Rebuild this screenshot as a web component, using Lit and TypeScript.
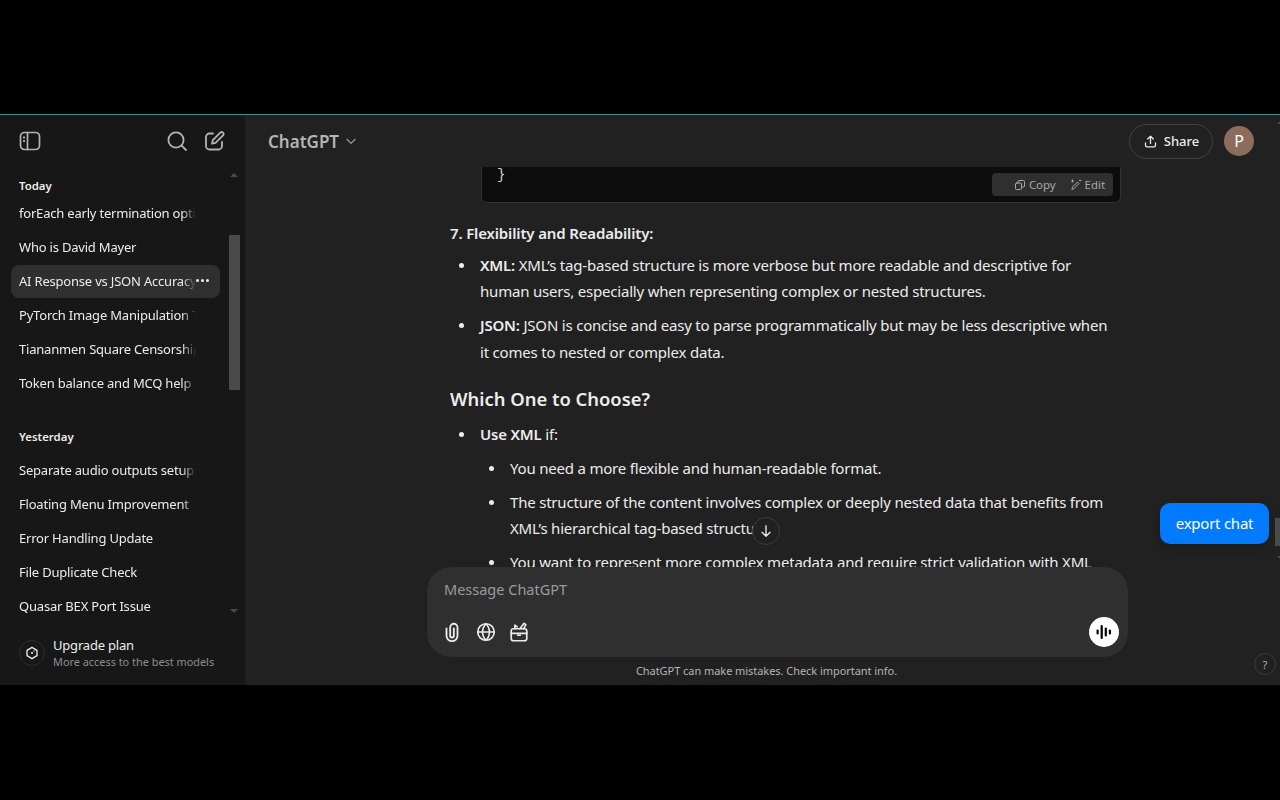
import { LitElement, html, css, svg } from 'lit';
import { customElement } from 'lit/decorators.js';

const today = [
  'forEach early termination options',
  'Who is David Mayer',
  'AI Response vs JSON Accuracy',
  'PyTorch Image Manipulation Tips',
  'Tiananmen Square Censorship',
  'Token balance and MCQ help',
];
const yesterday = [
  'Separate audio outputs setup',
  'Floating Menu Improvement',
  'Error Handling Update',
  'File Duplicate Check',
  'Quasar BEX Port Issue',
];

const icon = (size: number, body: unknown) => html`<svg
  width=${size}
  height=${size}
  viewBox="0 0 24 24"
  fill="none"
  stroke="currentColor"
  stroke-width="2"
  stroke-linecap="round"
  stroke-linejoin="round"
>${body}</svg>`;

@customElement('app-root')
export class AppRoot extends LitElement {
  static styles = css`
    :host {
      display: block;
      height: 800px;
      background: #000;
      font-family: 'Noto Sans', 'Open Sans', sans-serif;
      overflow: hidden;
      padding-top: 114px;
      box-sizing: border-box;
    }
    .frame {
      display: flex;
      height: 571px;
      border-top: 1px solid #3f8f8c;
      box-sizing: border-box;
      position: relative;
      background: #212121;
      color: #ececec;
    }
    .sidebar {
      width: 245px;
      flex: none;
      background: #171717;
      display: flex;
      flex-direction: column;
    }
    .side-top {
      height: 52px;
      flex: none;
      display: flex;
      align-items: center;
      padding: 0 19px 0 18px;
      color: #b4b4b4;
      gap: 13px;
    }
    .side-top .spacer {
      flex: 1;
    }
    .side-body {
      height: 456px;
      flex: none;
      display: flex;
      overflow: hidden;
    }
    .list {
      width: 220px;
      flex: none;
      padding: 10px 0 0 11px;
      box-sizing: border-box;
    }
    .label {
      height: 20px;
      line-height: 18px;
      padding-left: 8px;
      font-size: 11.4px;
      font-weight: 600;
      color: #ececec;
    }
    .item {
      height: 33px;
      margin-bottom: 1px;
      width: 209px;
      box-sizing: border-box;
      border-radius: 8px;
      display: flex;
      align-items: center;
      padding: 0 0 2px 8px;
      font-size: 13px;
      letter-spacing: -0.2px;
      color: #ececec;
      position: relative;
    }
    .item span {
      display: block;
      width: 177px;
      white-space: nowrap;
      overflow: hidden;
      -webkit-mask-image: linear-gradient(to right, #000 92%, transparent);
      mask-image: linear-gradient(to right, #000 92%, transparent);
    }
    .item.active {
      background: #2f2f2f;
    }
    .dots {
      position: absolute;
      left: 185px;
      top: 14px;
      display: flex;
      gap: 2px;
    }
    .dots i {
      width: 3px;
      height: 3px;
      border-radius: 50%;
      background: #ececec;
    }
    .group-gap {
      height: 27px;
    }
    .yesterday-gap {
      height: 6px;
    }
    .side-scroll {
      width: 11px;
      margin-left: 9px;
      position: relative;
      background: #171717;
    }
    .thumb {
      position: absolute;
      top: 68px;
      left: 0;
      width: 11px;
      height: 155px;
      background: #4a4a4a;
    }
    .arrow-up,
    .arrow-down {
      position: absolute;
      left: 1px;
      width: 0;
      height: 0;
      border-left: 4px solid transparent;
      border-right: 4px solid transparent;
    }
    .arrow-up {
      top: 6px;
      border-bottom: 4px solid #4a4a4a;
    }
    .arrow-down {
      top: 442px;
      border-top: 4px solid #4a4a4a;
    }
    .upgrade {
      flex: 1;
      display: flex;
      align-items: center;
      padding: 0 0 2px 19px;
      gap: 8px;
    }
    .up-icon {
      width: 26px;
      height: 26px;
      border-radius: 50%;
      border: 1px solid #2f2f2f;
      box-sizing: border-box;
      display: flex;
      align-items: center;
      justify-content: center;
      color: #ececec;
    }
    .up-title {
      font-size: 13px;
      letter-spacing: -0.2px;
      line-height: 17px;
      color: #ececec;
    }
    .up-sub {
      font-size: 10.9px;
      line-height: 16px;
      color: #8e8e8e;
    }
    .main {
      flex: 1;
      min-width: 0;
      display: flex;
      flex-direction: column;
    }
    .header {
      height: 52px;
      flex: none;
      display: flex;
      align-items: center;
      padding: 0 26px 0 23px;
    }
    .model {
      font-size: 17px;
      font-weight: 600;
      color: #b4b4b4;
    }
    .chev {
      margin-left: 5px;
      display: flex;
      color: #9b9b9b;
    }
    .header .spacer {
      flex: 1;
    }
    .share {
      width: 84px;
      height: 35px;
      border: 1px solid #424242;
      border-radius: 18px;
      box-sizing: border-box;
      display: flex;
      align-items: center;
      justify-content: center;
      gap: 6px;
      font-size: 13px;
      font-weight: 500;
      color: #ececec;
    }
    .avatar {
      width: 30px;
      height: 30px;
      margin-left: 11px;
      border-radius: 50%;
      background: #8c6d5d;
      display: flex;
      align-items: center;
      justify-content: center;
      font-size: 16px;
      color: #fff;
    }
    .thread {
      height: 400px;
      flex: none;
      overflow: hidden;
      position: relative;
    }
    .col {
      width: 672px;
      margin-left: 205px;
      font-size: 15px;
      letter-spacing: -0.2px;
      line-height: 26.4px;
      color: #ececec;
    }
    .code {
      margin: -11px 0 0 31px;
      width: 640px;
      height: 47px;
      box-sizing: border-box;
      background: #0d0d0d;
      border: 1px solid #333;
      border-radius: 6px;
      position: relative;
      font-family: 'Liberation Mono', monospace;
      font-size: 14px;
      line-height: 20px;
      padding: 8px 0 0 15px;
      color: #d4d4d4;
    }
    .toolbar {
      position: absolute;
      right: 7px;
      bottom: 6px;
      width: 121px;
      height: 23px;
      background: #2f2f2f;
      border-radius: 4px;
      display: flex;
      align-items: center;
      justify-content: flex-end;
      gap: 14px;
      padding-right: 8px;
      box-sizing: border-box;
      font-family: 'Noto Sans', sans-serif;
      font-size: 11.4px;
      letter-spacing: 0;
      color: #a8a8a8;
    }
    .toolbar div {
      display: flex;
      align-items: center;
      gap: 3px;
    }
    h4 {
      margin: 17px 0 6px;
      font-size: 15px;
      letter-spacing: -0.15px;
      line-height: 26px;
      font-weight: 600;
    }
    h3 {
      margin: 19px 0 7px;
      font-size: 18.4px;
      letter-spacing: 0;
      line-height: 30px;
      font-weight: 600;
    }
    ul {
      margin: 0;
      padding-left: 30px;
      list-style: none;
    }
    li {
      margin-bottom: 7.5px;
      white-space: nowrap;
      position: relative;
    }
    li::before {
      content: '';
      position: absolute;
      left: -21.5px;
      top: 11px;
      width: 5px;
      height: 5px;
      border-radius: 50%;
      background: #ececec;
    }
    li > ul {
      margin-top: 7.5px;
    }
    b {
      font-weight: 600;
    }
    .composer-wrap {
      flex: 1;
      position: relative;
    }
    .composer {
      margin-left: 182px;
      width: 701px;
      height: 90px;
      background: #2f2f2f;
      border-radius: 24px;
      box-sizing: border-box;
      padding: 11px 9px 10px 17px;
      display: flex;
      flex-direction: column;
      justify-content: space-between;
    }
    .placeholder {
      font-size: 14.5px;
      line-height: 22px;
      color: #9b9b9b;
    }
    .tools {
      display: flex;
      align-items: center;
      color: #ececec;
    }
    .tools svg {
      margin-right: 14.5px;
      margin-left: -3px;
    }
    .tools .spacer {
      flex: 1;
    }
    .voice {
      width: 30px;
      height: 30px;
      border-radius: 50%;
      background: #fff;
      display: flex;
      align-items: center;
      justify-content: center;
    }
    .voice svg {
      margin: 0;
    }
    .disclaimer {
      margin-left: 182px;
      width: 679px;
      text-align: center;
      font-size: 11px;
      letter-spacing: -0.05px;
      line-height: 28px;
      color: #b4b4b4;
    }
    .scroll-down {
      position: absolute;
      left: 507px;
      top: 350px;
      width: 28px;
      height: 28px;
      box-sizing: border-box;
      border-radius: 50%;
      background: #212121;
      border: 1px solid #3c3c3c;
      display: flex;
      align-items: center;
      justify-content: center;
      color: #ececec;
    }
    .export {
      position: absolute;
      left: 1160px;
      top: 388px;
      width: 109px;
      height: 41px;
      box-sizing: border-box;
      padding-bottom: 2px;
      border-radius: 10px;
      background: #007bff;
      color: #fff;
      font-size: 15px;
      letter-spacing: -0.25px;
      display: flex;
      align-items: center;
      justify-content: center;
      box-shadow: 0 4px 10px rgba(0, 0, 0, 0.2);
    }
    .help {
      position: absolute;
      left: 1254px;
      top: 538px;
      width: 22px;
      height: 22px;
      box-sizing: border-box;
      border-radius: 50%;
      border: 1px solid #3a3a3a;
      display: flex;
      align-items: center;
      justify-content: center;
      font-size: 11px;
      color: #b4b4b4;
    }
    .main-thumb {
      position: absolute;
      left: 1275px;
      top: 403px;
      width: 5px;
      height: 28px;
      background: #4a4a4a;
    }
    .main-arrow {
      position: absolute;
      left: 1277px;
      width: 0;
      height: 0;
      border-left: 3px solid transparent;
      border-right: 3px solid transparent;
    }
    .main-arrow.up {
      top: 6px;
      border-bottom: 3px solid #4a4a4a;
    }
    .main-arrow.down {
      top: 441px;
      border-top: 3px solid #4a4a4a;
    }
  `;

  private renderItems(items: string[]) {
    return items.map(
      (t) => html`<div class="item ${t.startsWith('AI Response') ? 'active' : ''}">
        <span>${t}</span>
        ${t.startsWith('AI Response') ? html`<div class="dots"><i></i><i></i><i></i></div>` : ''}
      </div>`
    );
  }

  render() {
    return html`
      <div class="frame">
        <aside class="sidebar">
          <div class="side-top">
            ${icon(24, svg`<rect x="2.500" y="3.500" width="19" height="17" rx="4" stroke-width="1.7"/><path d="M9.500 3.500v17" stroke-width="1.7"/><path d="M5.800 8.500h.5M5.800 12h.5" stroke-width="1.800"/>`)}
            <div class="spacer"></div>
            ${icon(24, svg`<circle cx="11" cy="11" r="7.600" stroke-width="1.800"/><path d="M16.600 16.600 21 21" stroke-width="1.800"/>`)}
            ${icon(24, svg`<path d="M11 4.500H7.500A3.500 3.500 0 0 0 4 8v9a3.500 3.500 0 0 0 3.500 3.500h9A3.500 3.500 0 0 0 20 17v-4" stroke-width="1.800"/><path d="M18.300 3.700a1.900 1.900 0 0 1 2.700 2.700l-7.500 7.500-3.500.8.800-3.500z" stroke-width="1.800"/>`)}
          </div>
          <div class="side-body">
            <div class="list">
              <div class="label">Today</div>
              ${this.renderItems(today)}
              <div class="group-gap"></div>
              <div class="label">Yesterday</div>
              <div class="yesterday-gap"></div>
              ${this.renderItems(yesterday)}
            </div>
            <div class="side-scroll">
              <div class="arrow-up"></div>
              <div class="thumb"></div>
              <div class="arrow-down"></div>
            </div>
          </div>
          <div class="upgrade">
            <div class="up-icon">
              ${icon(16, svg`<path d="M12 3.500 19.500 8v8L12 20.500 4.500 16V8z"/><circle cx="12" cy="12" r="1.600" fill="currentColor" stroke="none"/><circle cx="15" cy="9" r="1" fill="currentColor" stroke="none"/>`)}
            </div>
            <div>
              <div class="up-title">Upgrade plan</div>
              <div class="up-sub">More access to the best models</div>
            </div>
          </div>
        </aside>
        <section class="main">
          <header class="header">
            <div class="model">ChatGPT</div>
            <div class="chev">${icon(14, svg`<path d="m5 9 7 7 7-7"/>`)}</div>
            <div class="spacer"></div>
            <div class="share">
              ${icon(15, svg`<path d="M12 15V4M7.500 8 12 3.500 16.500 8M4 14v4a2.500 2.500 0 0 0 2.500 2.500h11A2.500 2.500 0 0 0 20 18v-4"/>`)}
              Share
            </div>
            <div class="avatar">P</div>
          </header>
          <div class="thread">
            <div class="col">
              <div class="code">
                }
                <div class="toolbar">
                  <div>
                    ${icon(12, svg`<rect x="3" y="8" width="12" height="13" rx="2"/><path d="M8 8V5a2 2 0 0 1 2-2h9a2 2 0 0 1 2 2v9a2 2 0 0 1-2 2h-4"/>`)}
                    Copy
                  </div>
                  <div>
                    ${icon(12, svg`<path d="m4 20 1-4L15 6l3 3L8 19z"/><path d="M3 4h4M5 2v4M19 3h3"/>`)}
                    Edit
                  </div>
                </div>
              </div>
              <h4>7. Flexibility and Readability:</h4>
              <ul>
                <li>
                  <b>XML:</b> XML’s tag-based structure is more verbose but more readable and descriptive for<br />
                  human users, especially when representing complex or nested structures.
                </li>
                <li>
                  <b>JSON:</b> JSON is concise and easy to parse programmatically but may be less descriptive when<br />
                  it comes to nested or complex data.
                </li>
              </ul>
              <h3>Which One to Choose?</h3>
              <ul>
                <li>
                  <b>Use XML</b> if:
                  <ul>
                    <li>You need a more flexible and human-readable format.</li>
                    <li>
                      The structure of the content involves complex or deeply nested data that benefits from<br />
                      XML’s hierarchical tag-based structure.
                    </li>
                    <li>You want to represent more complex metadata and require strict validation with XML</li>
                  </ul>
                </li>
              </ul>
            </div>
            <div class="scroll-down">${icon(16, svg`<path d="M12 4v16M6 14l6 6 6-6"/>`)}</div>
          </div>
          <div class="composer-wrap">
            <div class="composer">
              <div class="placeholder">Message ChatGPT</div>
              <div class="tools">
                ${icon(22, svg`<path d="M6 8v8a6 6 0 0 0 12 0V7a4 4 0 0 0-8 0v9a2 2 0 0 0 4 0V8"/>`)}
                ${icon(22, svg`<circle cx="12" cy="12" r="9" stroke-width="1.800"/><path d="M3 12h18M12 3c-5 5-5 13 0 18M12 3c5 5 5 13 0 18" stroke-width="1.800"/>`)}
                ${icon(22, svg`<rect x="3.500" y="8.500" width="17" height="13" rx="2.500" stroke-width="1.800"/><path d="M3.500 13.500h17M10.500 15.500h3" stroke-width="1.800"/><path d="M7.500 8.500V4.500l2.500 2M13 8.500l4.500-6 2 1.500-2.500 4.500" stroke-width="1.800"/>`)}
                <div class="spacer"></div>
                <div class="voice">
                  <svg width="20" height="20" viewBox="0 0 20 20" fill="#000">
                    <rect x="2.500" y="7.500" width="2.200" height="5" rx="1.100" />
                    <rect x="6.600" y="3" width="2.200" height="14" rx="1.100" />
                    <rect x="10.700" y="5.500" width="2.200" height="9" rx="1.100" />
                    <rect x="14.800" y="7.500" width="2.200" height="5" rx="1.100" />
                  </svg>
                </div>
              </div>
            </div>
            <div class="disclaimer">ChatGPT can make mistakes. Check important info.</div>
          </div>
        </section>
        <div class="export">export chat</div>
        <div class="help">?</div>
        <div class="main-thumb"></div>
        <div class="main-arrow up"></div>
        <div class="main-arrow down"></div>
      </div>
    `;
  }
}
